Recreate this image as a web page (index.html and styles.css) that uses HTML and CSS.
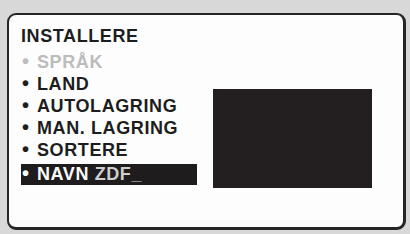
FILE: index.html
```html
<!DOCTYPE html>
<html lang="no">
<head>
    <meta charset="UTF-8">
    <meta name="viewport" content="width=device-width, initial-scale=1.0">
    <title>Installere</title>
    <link rel="stylesheet" href="styles.css">
</head>
<body>
    <div class="screen">
        <div class="menu">
            <div class="menu_title">INSTALLERE</div>
            <ul class="menu_list">
                <li class="item item_off"><span class="dot">&bull;</span>SPRÅK</li>
                <li class="item"><span class="dot">&bull;</span>LAND</li>
                <li class="item"><span class="dot">&bull;</span>AUTOLAGRING</li>
                <li class="item"><span class="dot">&bull;</span>MAN. LAGRING</li>
                <li class="item"><span class="dot">&bull;</span>SORTERE</li>
                <li class="item item_active"><span class="dot">&bull;</span>NAVN <span class="name_val">ZDF_</span></li>
            </ul>
        </div>
        <div class="preview"></div>
    </div>
</body>
</html>
```

FILE: styles.css
```css
body{
  margin: 0;
  background-color: #d8d8d8;
  font-family: "Liberation Sans", Arial, sans-serif;
}
.screen{
  box-sizing: border-box;
  width: 399px;
  height: 217px;
  margin: 13px 0 0 7px;
  padding: 10px 0 0 12px;
  background-color: #fdfdfd;
  border: 2.5px solid #262626;
  border-right-width: 3px;
  border-bottom-width: 3px;
  border-radius: 9px;
  display: flex;
  gap: 16px;
}
.menu{
  width: 176px;
}
.menu_title{
  font-size: 18px;
  font-weight: bold;
  line-height: 22px;
  letter-spacing: 0.6px;
  color: #1d1d1d;
  margin-bottom: 4px;
}
.menu_list{
  list-style: none;
  margin: 0;
  padding: 0;
}
.item{
  font-size: 18px;
  font-weight: bold;
  line-height: 22px;
  letter-spacing: 0.6px;
  color: #1d1d1d;
  white-space: nowrap;
}
.dot{
  display: inline-block;
  width: 15px;
  padding-left: 1px;
  font-size: 20px;
  line-height: 18px;
}
.item_off{
  color: #bcbcbc;
}
.item_active{
  margin-top: 3px;
  line-height: 21px;
  background-color: #1f1c1d;
  color: #fafafa;
}
.name_val{
  color: #cfcfcf;
}
.preview{
  width: 159px;
  height: 99px;
  margin-top: 64px;
  background-color: #231f20;
}
```
